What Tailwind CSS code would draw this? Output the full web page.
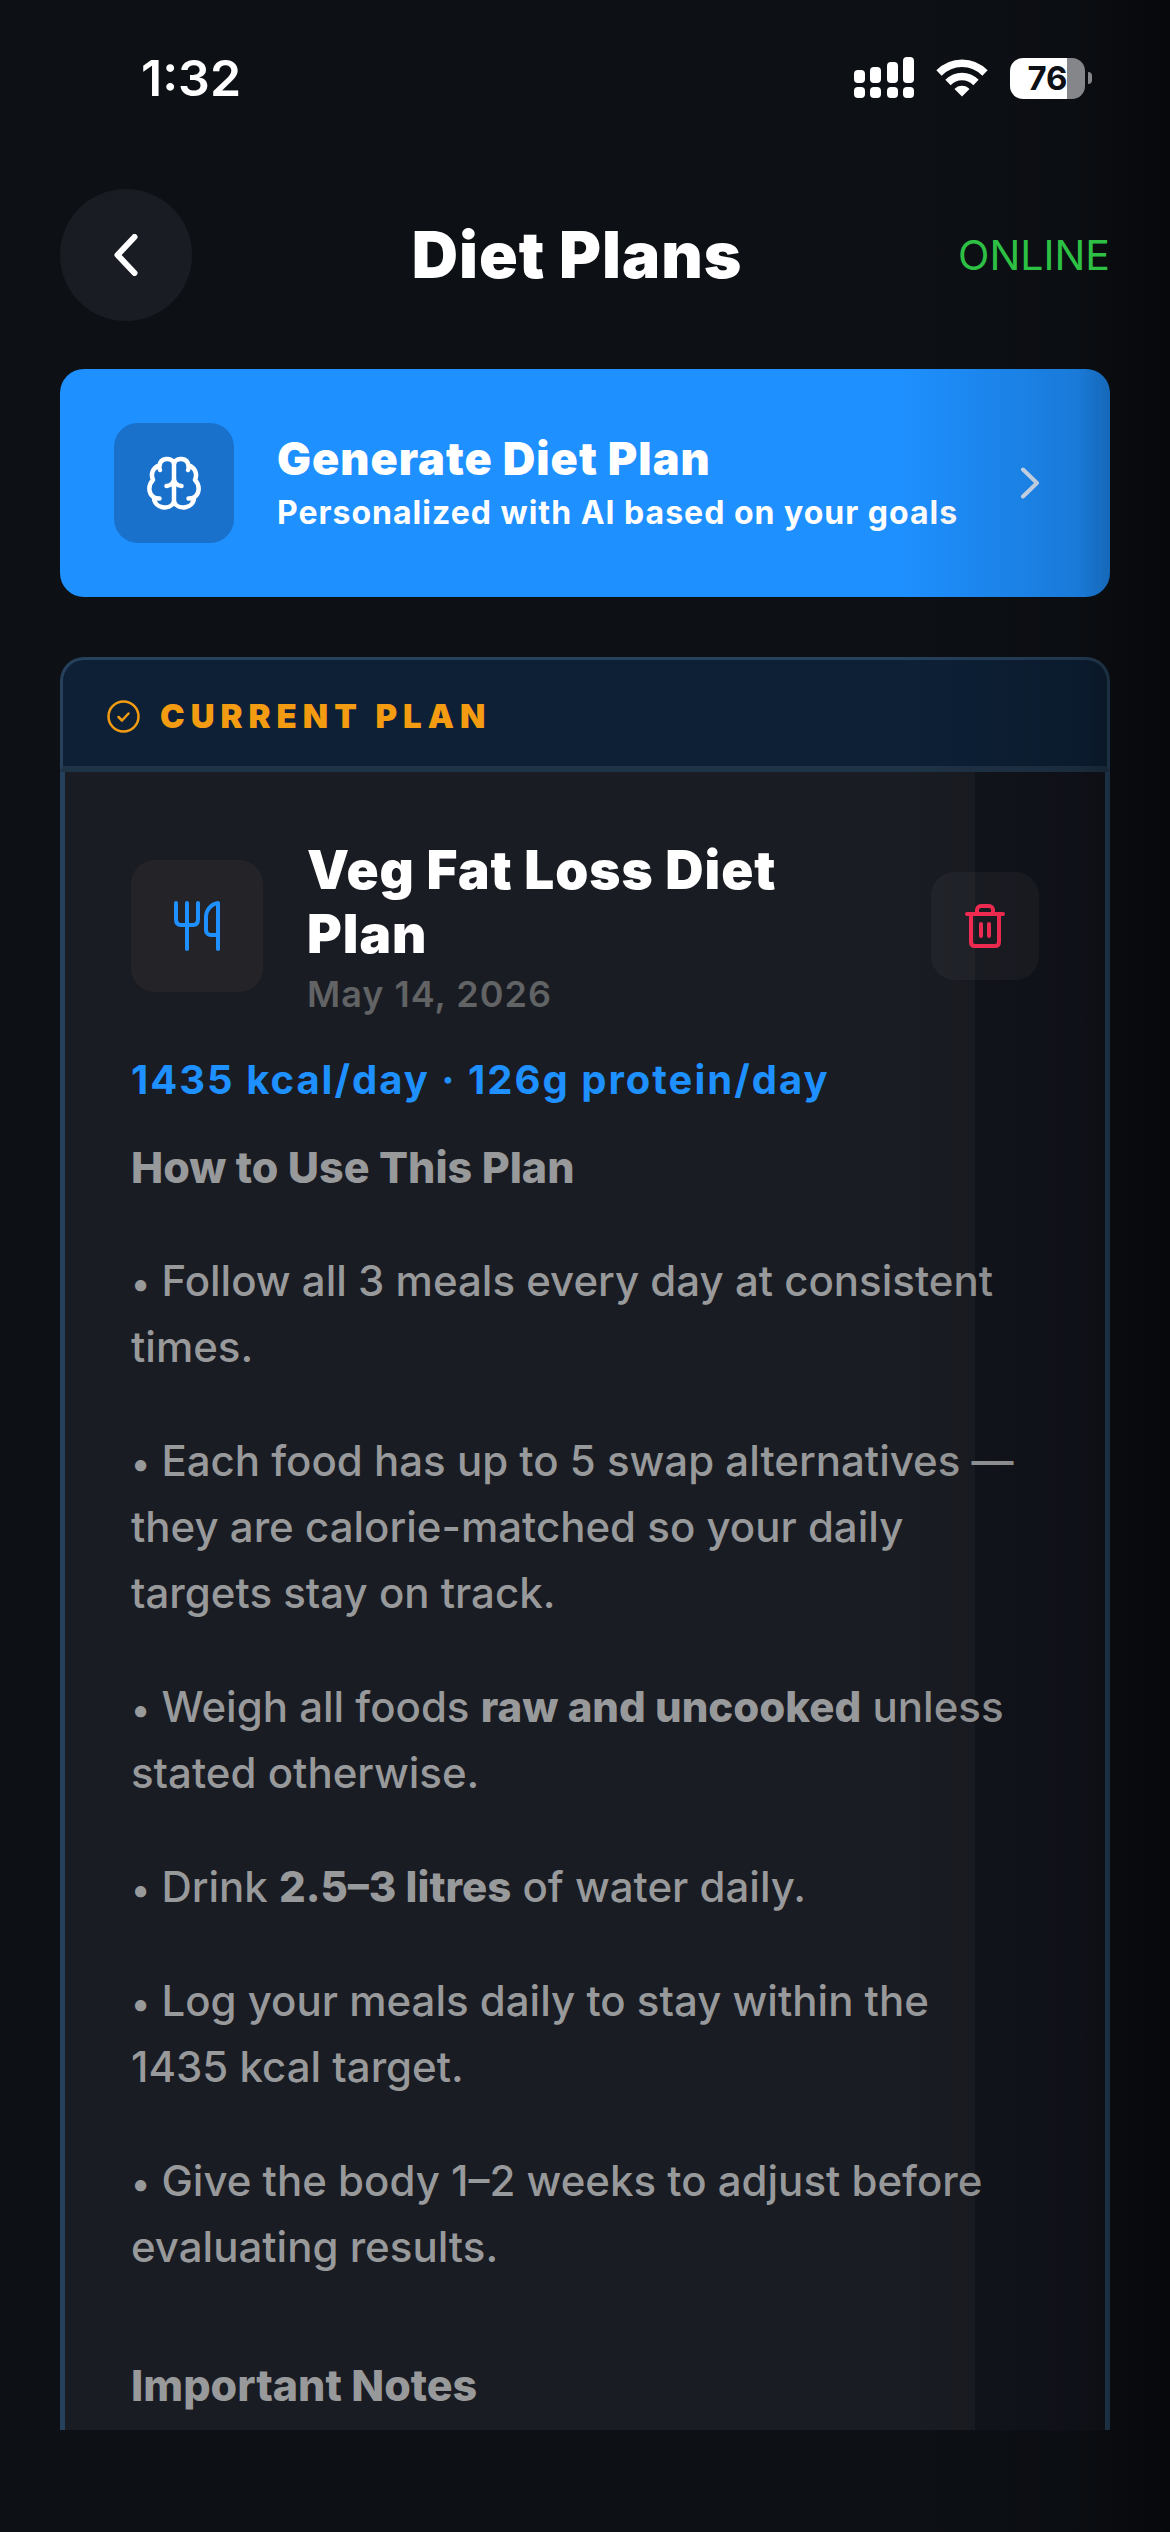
<!DOCTYPE html>
<html lang="en">
<head>
    <meta charset="UTF-8">
    <meta name="viewport" content="width=device-width, initial-scale=1.0">
    <title>Diet Plans</title>

    <script src="https://cdn.jsdelivr.net/npm/@tailwindcss/browser@4"></script>
</head>
<body class="relative min-h-screen flex flex-col bg-[#0d1015] font-['Inter','Liberation_Sans',sans-serif] text-white">
    <!-- Shade on the right edge of the screen -->
    <div class="pointer-events-none absolute inset-y-0 right-0 z-10 w-[270px] bg-linear-to-r from-transparent via-black/15 via-65% to-black/50"></div>

    <!-- Status bar -->
    <div class="relative z-20 flex h-[156px] items-center justify-between pl-[141px] pr-[78px]">
        <span class="text-[50px] font-semibold leading-none">1:32</span>
        <div class="flex items-center gap-[22px]">
            <svg class="h-[42px] w-[60px]" viewBox="0 0 60 42" fill="currentColor">
                <rect x="0" y="13" width="11" height="13" rx="4"/>
                <rect x="16" y="10" width="11" height="16" rx="4"/>
                <rect x="33" y="5" width="11" height="21" rx="4"/>
                <rect x="49" y="0" width="11" height="26" rx="4"/>
                <rect x="0" y="30" width="11" height="11" rx="4"/>
                <rect x="16" y="30" width="11" height="11" rx="4"/>
                <rect x="33" y="30" width="11" height="11" rx="4"/>
                <rect x="49" y="30" width="11" height="11" rx="4"/>
            </svg>
            <svg class="h-[38px] w-[52px]" viewBox="0 0 52 38" fill="none" stroke="currentColor" stroke-width="7.5">
                <path d="M3 14C16 1 36 1 49 14"/>
                <path d="M12 23.500C20 15.500 32 15.500 40 23.500"/>
                <path d="M18.500 30C22 25.500 30 25.500 33.500 30L26 37.500Z" fill="currentColor" stroke="none"/>
            </svg>
            <div class="flex items-center gap-[3px]">
                <div class="flex h-[41px] w-[75px] items-center justify-center rounded-[13px] bg-linear-to-r from-white from-76% to-[#858689] to-76%">
                    <span class="text-[33px] font-bold leading-none text-[#0d1015]">76</span>
                </div>
                <div class="h-3 w-1 rounded-r-full bg-[#858689]"></div>
            </div>
        </div>
    </div>

    <!-- Header -->
    <header class="relative z-20 grid grid-cols-[1fr_auto_1fr] items-center px-[60px] pt-[33px]">
        <button type="button" aria-label="Back" class="flex size-[132px] items-center justify-center rounded-full bg-[#1a1c23]">
            <svg class="h-[42px] w-6" viewBox="0 0 24 42" fill="none" stroke="currentColor" stroke-width="6" stroke-linecap="round" stroke-linejoin="round">
                <path d="M20.500 3L3.500 21l17 18"/>
            </svg>
        </button>
        <h1 class="pr-4 text-[64px] font-black leading-none tracking-[1px]">Diet Plans</h1>
        <span class="text-right text-[41px] leading-none text-[#2dc044]">ONLINE</span>
    </header>

    <main class="flex flex-1 flex-col px-[60px] pt-12">
        <!-- Generate button -->
        <button type="button" class="flex items-center rounded-3xl bg-[#1e90ff] px-[54px] py-[54px] text-left">
            <span class="flex size-[120px] shrink-0 items-center justify-center rounded-3xl bg-[#1971cc]">
                <svg class="size-[54px]" viewBox="0 0 54 54" fill="none" stroke="currentColor" stroke-width="4.5" stroke-linecap="round" stroke-linejoin="round">
                    <path d="M27 7v41"/>
                    <path d="M27 7C24.500 1 13.500 1.500 12.500 9.500 5.500 11.500 3.500 18.500 6 24 1 29 1 37.500 7 41.500 7 53 23.500 54.500 27 46"/>
                    <path d="M27 7C29.500 1 40.500 1.500 41.500 9.500 48.500 11.500 50.500 18.500 48 24 53 29 53 37.500 47 41.500 47 53 30.500 54.500 27 46"/>
                    <path d="M12.500 9.500c-.5 1.500-.3 3 .5 4.500M41.500 9.500c.5 1.500.3 3-.5 4.500"/>
                    <path d="M7 41.500c2 1 3.500 1 5.500 1M47 41.500c-2 1-3.500 1-5.500 1"/>
                    <path d="M19.500 30c4-.5 6.500-2.500 7.500-6 1 3.500 3.500 5.500 7.500 6"/>
                </svg>
            </span>
            <span class="ml-[43px] flex flex-1 flex-col pt-[6px]">
                <span class="text-[45px] font-black leading-[54px] tracking-[1px]">Generate Diet Plan</span>
                <span class="text-[32px] font-bold leading-[54px] tracking-[1px]">Personalized with AI based on your goals</span>
            </span>
            <svg class="mr-4 h-8 w-5" viewBox="0 0 20 32" fill="none" stroke="#d6e6fa" stroke-width="4" stroke-linecap="round" stroke-linejoin="round">
                <path d="M3 2.500L17 16 3 29.500"/>
            </svg>
        </button>

        <!-- Current plan -->
        <section class="mt-[60px] flex flex-1 flex-col">
            <div class="flex h-[115px] items-center gap-5 rounded-t-3xl border-[3px] border-b-[6px] border-[#26415b] border-b-[#1f3347] bg-[#0d2036] px-11 pt-[6px] text-[#f39c12]">
                <svg class="size-[33px]" viewBox="0 0 33 33" fill="none" stroke="currentColor" stroke-width="2.500" stroke-linecap="round" stroke-linejoin="round">
                    <circle cx="16.500" cy="16.500" r="15"/>
                    <path d="M11.500 17l3.500 3.500 6.500-7"/>
                </svg>
                <h2 class="text-[33px] font-black leading-none tracking-[6px]">CURRENT PLAN</h2>
            </div>

            <div class="relative flex-1 border-x-[5px] border-[#26415b] bg-[#1a1c23] px-[66px] pt-[66px] pb-[11px]">
                <div class="absolute inset-y-0 right-0 w-[130px] bg-[#10131a]/80"></div>

                <div class="relative">
                    <div class="flex items-center">
                        <div class="flex size-[132px] shrink-0 items-center justify-center rounded-3xl bg-[#232328]">
                            <svg class="h-[52px] w-12" viewBox="0 0 48 52" fill="none" stroke="#1e90ff" stroke-width="4" stroke-linecap="round" stroke-linejoin="round">
                                <path d="M3 3v16c0 4 2 6 5 6h12c3 0 5-2 5-6V3M14 3v46"/>
                                <path d="M45 49V3c-7 1-12 7-12 14v13c0 3 2 5 5 5h7"/>
                            </svg>
                        </div>
                        <div class="ml-11 flex-1">
                            <h3 class="text-[53px] font-black leading-[64px] tracking-[1px]">Veg Fat Loss Diet<br>Plan</h3>
                            <p class="mt-2 text-[36px] font-semibold leading-10 tracking-[1px] text-[#616365]">May 14, 2026</p>
                        </div>
                        <button type="button" aria-label="Delete plan" class="flex size-[108px] shrink-0 items-center justify-center rounded-3xl bg-white/4">
                            <svg class="h-11 w-10" viewBox="0 0 40 44" fill="none" stroke="#ff2d55" stroke-width="4" stroke-linecap="round" stroke-linejoin="round">
                                <path d="M2 10h36M12 10V6c0-2 1.500-4 4-4h8c2.500 0 4 2 4 4v4"/>
                                <path d="M6 10v28c0 2.500 1.500 4 4 4h20c2.500 0 4-1.500 4-4V10M16 20v12M24 20v12"/>
                            </svg>
                        </button>
                    </div>

                    <p class="mt-[42px] text-[40px] font-bold leading-[48px] tracking-[2px] text-[#1e90ff]">1435 kcal/day · 126g protein/day</p>

                    <div class="mt-[30px] flex flex-col gap-12 pr-4 text-[42px] font-medium leading-[66px] text-[#98999b]">
                        <h4 class="text-[43px] font-extrabold">How to Use This Plan</h4>
                        <p><span class="text-[36px] leading-none">•</span> Follow all 3 meals every day at consistent times.</p>
                        <p><span class="text-[36px] leading-none">•</span> Each food has up to 5 swap alternatives — they are calorie-matched so your daily targets stay on track.</p>
                        <p><span class="text-[36px] leading-none">•</span> Weigh all foods <strong class="font-extrabold">raw and uncooked</strong> unless stated otherwise.</p>
                        <p><span class="text-[36px] leading-none">•</span> Drink <strong class="font-extrabold">2.5–3 litres</strong> of water daily.</p>
                        <p><span class="text-[36px] leading-none">•</span> Log your meals daily to stay within the 1435 kcal target.</p>
                        <p><span class="text-[36px] leading-none">•</span> Give the body 1–2 weeks to adjust before evaluating results.</p>
                        <h4 class="pt-6 text-[43px] font-extrabold">Important Notes</h4>
                    </div>
                </div>
            </div>
        </section>
    </main>

    <!-- Home indicator area -->
    <footer class="h-[102px]"></footer>
</body>
</html>
